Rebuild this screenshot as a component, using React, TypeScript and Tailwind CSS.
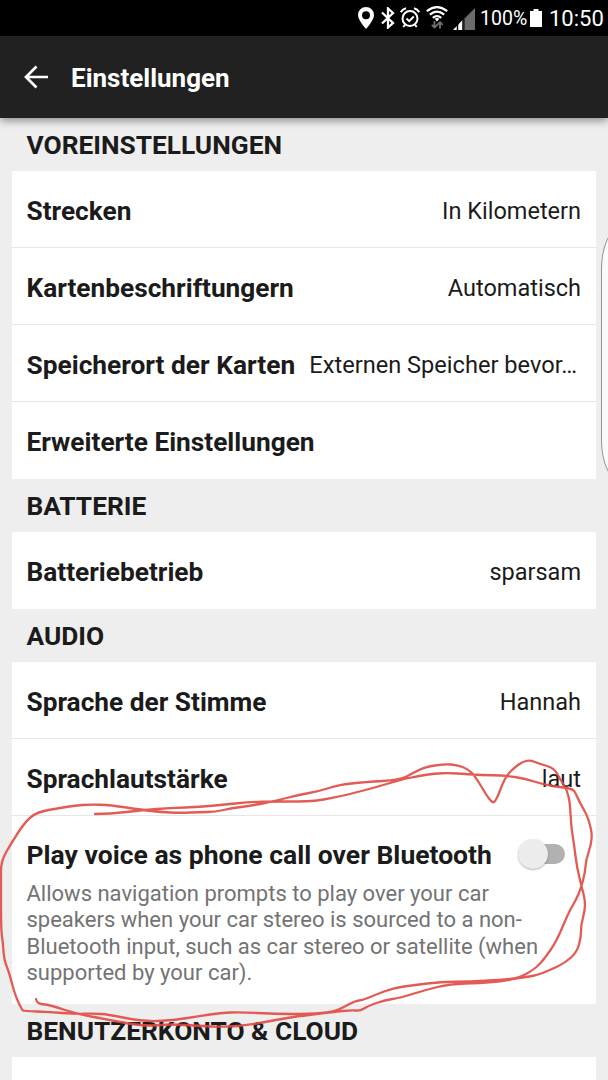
import {FC, ReactNode} from "react";

type Point = [number, number];

const outerStroke: Point[] = [
    [95, 814], [110, 814], [143, 810], [170, 808], [200, 807], [225, 804.5], [250, 802], [275, 801.5], [298, 801.5], [315, 801],
    [332, 798], [350, 794], [375, 787.5], [400, 780], [418, 776], [435, 773.5], [450, 773], [465, 774], [480, 775], [505, 775.5],
    [525, 778.5], [545, 785], [560, 787], [573, 789], [576, 794], [580, 803], [587, 815], [590, 825], [592, 834], [591, 845],
    [586, 860], [585, 873], [581, 888], [576, 900], [570, 910], [565, 921], [560, 933], [554, 945], [547, 955], [540, 964],
    [533, 970], [519, 978], [500, 980], [470, 981.5], [440, 982], [415, 985], [393, 988], [375, 995], [363, 1000], [355, 1001],
    [344, 1007], [333, 1012], [310, 1014], [275, 1014], [240, 1012], [220, 1013], [200, 1016], [175, 1020], [150, 1021.5], [130, 1019],
    [108, 1014.5], [95, 1013.5], [75, 1014], [50, 1012], [24, 1011], [22, 1010], [15, 995], [9, 972], [4, 960], [3, 943],
    [1, 930], [1, 880], [1, 861], [12, 842], [25, 822], [37, 812], [60, 808], [75, 805.5], [90, 804.5], [110, 805],
    [143, 810], [160, 812], [180, 813], [200, 812], [215, 812], [232, 808], [250, 806], [275, 801], [298, 795], [320, 791],
    [338, 785], [365, 782], [400, 780], [413, 773], [425, 767], [445, 764], [457, 765], [468, 769], [475, 776], [487, 796],
    [491, 801], [494, 803], [498, 796], [502, 785], [507, 775], [514, 768], [522, 762], [530, 760], [540, 764], [554, 768],
    [560, 779], [567, 790], [570, 803], [571, 825], [574, 844], [577, 868], [582, 888], [585, 900], [585, 910], [581, 925],
    [581, 937], [577, 952], [565, 963], [550, 970], [535, 976], [518, 978], [505, 981], [480, 983], [450, 984], [425, 990],
    [400, 998], [385, 1000], [368, 1006], [360, 1011], [352, 1010], [333, 1012], [300, 1016], [275, 1020], [250, 1025], [225, 1027],
    [200, 1026], [170, 1024], [150, 1026], [130, 1024], [105, 1019], [77, 1014], [50, 1005], [40, 1004], [37, 1002], [36, 999],
];

const smooth = (points: Point[]) => {
    let d = `M${points[0][0]} ${points[0][1]}`;
    for (let i = 1; i < points.length - 1; i++) {
        const [x, y] = points[i];
        const [nx, ny] = points[i + 1];
        d += ` Q${x} ${y} ${(x + nx) / 2} ${(y + ny) / 2}`;
    }
    const last = points[points.length - 1];
    return `${d} L${last[0]} ${last[1]}`;
};

const StatusBar: FC = () => {
    return (
        <div className="h-9 bg-black text-white flex items-center justify-end pr-[6px] whitespace-nowrap">
            <svg className="w-4 h-[22px] mr-[7px]" viewBox="0 0 16 22" fill="currentColor">
                <path fillRule="evenodd" d="M8 0a8 8 0 0 0-8 8c0 5.5 8 14 8 14s8-8.500 8-14a8 8 0 0 0-8-8zm0 4.200a4 4 0 1 1 0 8 4 4 0 0 1 0-8z"/>
            </svg>
            <svg className="w-[14px] h-[22px] mr-[5px]" viewBox="0 0 14 22" fill="none" stroke="currentColor" strokeWidth="2.300">
                <path d="M1 5.500 12 16l-5 4.500V1.500L12 6 1 16.500"/>
            </svg>
            <svg className="w-5 h-[22px] mr-1.5" viewBox="0 0 20 22" fill="none" stroke="currentColor" strokeWidth="2">
                <circle cx="10" cy="11.500" r="7.500"/>
                <path d="m6.500 11.500 2.700 2.600 4.600-4.600M.8 5.200Q2.500 2 6 1.300M19.200 5.200Q17.500 2 14 1.300M5.200 17.500 3.300 20M14.800 17.500l1.900 2.500"/>
            </svg>
            <svg className="w-[22px] h-[24px] mr-[5px]" viewBox="0 0 22 24" fill="none" stroke="currentColor" strokeWidth="2.200">
                <path d="M.8 5.200Q11-2.800 21.200 5.200M3.800 8.600Q11 2.800 18.200 8.600M6.800 11.800Q11 8.300 15.200 11.800"/>
                <path d="M8.600 12.800Q11 11 13.400 12.800L11 15.600z" fill="currentColor" stroke="none"/>
                <path d="M8.500 15v6M5.800 18.800l2.700 2.700 2.700-2.700M14 22.500v-6M11.300 18.800 14 16.200l2.700 2.600" stroke="#707070" strokeWidth="1.800"/>
            </svg>
            <svg className="w-[22px] h-[22px] mr-[6px] mt-0.5" viewBox="0 0 22 22">
                <path d="M0 22 10.500 11V22z" fill="#fff"/>
                <path d="M4.500 16v6M10 10v12" stroke="#000" strokeWidth="1.500"/>
                <path d="M11.500 10.500 22 0v22H11.500z" fill="#6b6b6b"/>
            </svg>
            <span className="text-[19.500px] leading-9 w-[46px] mr-[4px] mt-0.5 -ml-px">100%</span>
            <svg className="w-3 h-[18px] mr-[8px]" viewBox="0 0 12 18" fill="currentColor">
                <path d="M3.500 0h5v2H12v16H0V2h3.500z"/>
            </svg>
            <span className="text-[22px] leading-9 mt-0.5 w-[53px] -ml-px">10:50</span>
        </div>
    )
}

const Header: FC = () => {
    return (
        <header className="relative h-[82px] bg-[#212121] text-white flex items-center pl-6 shadow-[0_3px_8px_rgba(0,0,0,0.4)]">
            <svg className="w-6 h-6 mr-[23px]" viewBox="0 0 24 24" fill="none" stroke="currentColor" strokeWidth="2.700">
                <path d="M24 12H2.500M12.500 1.500 2 12l10.500 10.500"/>
            </svg>
            <h1 className="text-[26px] font-bold pt-0.5">Einstellungen</h1>
        </header>
    )
}

const Section: FC<{title: string, children?: ReactNode}> = ({title, children}) => {
    return (
        <section className="px-3">
            <h2 className="h-[53px] leading-[55px] pl-[14.500px] text-[26.300px] font-bold">{title}</h2>
            <div className="bg-white divide-y divide-[#e6e6e6]">{children}</div>
        </section>
    )
}

const Row: FC<{label: string, value?: string}> = ({label, value}) => {
    return (
        <div className="h-[77px] pl-[14.500px] pr-[15px] flex items-center justify-between whitespace-nowrap">
            <span className="text-[26.250px] leading-[30px] font-bold pt-[3px]">{label}</span>
            <span className="text-[23.500px] leading-7 pt-[3px]">{value}</span>
        </div>
    )
}

const App: FC = () => {
    return (
        <div className="relative w-[608px] h-[1080px] overflow-hidden bg-[#eee] text-[#1b1b1b] font-[Roboto,sans-serif]">
            <StatusBar/>
            <Header/>
            <Section title="VOREINSTELLUNGEN">
                <Row label="Strecken" value="In Kilometern"/>
                <Row label="Kartenbeschriftungern" value="Automatisch"/>
                <div className="h-[77px] pl-[14.500px] pr-[19px] flex items-center justify-between whitespace-nowrap">
                    <span className="text-[26.300px] leading-[30px] font-bold pt-[3px]">Speicherort der Karten</span>
                    <span className="text-[23.600px] leading-7 pt-[3px]">Externen Speicher bevor…</span>
                </div>
                <Row label="Erweiterte Einstellungen"/>
            </Section>
            <Section title="BATTERIE">
                <Row label="Batteriebetrieb" value="sparsam"/>
            </Section>
            <Section title="AUDIO">
                <Row label="Sprache der Stimme" value="Hannah"/>
                <Row label="Sprachlautstärke" value="laut"/>
                <div className="h-[188px] pl-[14.500px] pt-[22px]">
                    <div className="flex items-center h-8">
                        <span className="text-[26.500px] font-bold whitespace-nowrap w-[491px] pt-px">Play voice as phone call over Bluetooth</span>
                        <span className="flex items-center w-[47px] h-5 rounded-full bg-[#b1b1b1]">
                            <span className="w-[30px] h-[30px] shrink-0 rounded-full bg-[#ececec] shadow-[0_1px_2px_rgba(0,0,0,0.3)]"/>
                        </span>
                    </div>
                    <p className="mt-[11px] text-[22px] leading-[26.300px] text-[#737373] whitespace-nowrap">
                        Allows navigation prompts to play over your car<br/>
                        speakers when your car stereo is sourced to a non-<br/>
                        Bluetooth input, such as car stereo or satellite (when<br/>
                        supported by your car).
                    </p>
                </div>
            </Section>
            <Section title="BENUTZERKONTO &amp; CLOUD">
                <div className="h-[77px]"/>
            </Section>

            {/* edge panel handle */}
            <div className="absolute left-[601px] top-[229px] w-10 h-[251px] rounded-[18px/40px] border-[1.500px] border-[#929292] bg-[#fafafa]"/>
            {/* pen marks */}
            <svg className="absolute inset-0 w-full h-full pointer-events-none" viewBox="0 0 608 1080" fill="none">
                <path d={smooth(outerStroke)} stroke="#df4a43" strokeOpacity="0.9" strokeWidth="2.300" strokeLinejoin="round" strokeLinecap="round"/>
            </svg>
        </div>
    )
}

export default App
